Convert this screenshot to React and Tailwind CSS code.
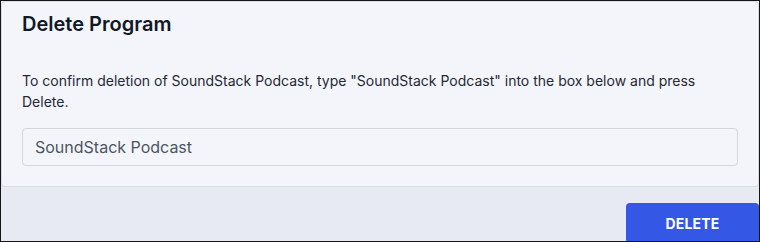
export default function App() {
  return (
    <div
      className="w-[760px] h-[242px] overflow-hidden border border-[#141414] bg-[#e8eaf3] flex flex-col"
      style={{ fontFamily: "Inter, 'Noto Sans', sans-serif" }}
    >
      {/* CARD */}
      <div className="rounded-[4px] border border-[#d9dce4] bg-[#f4f5fa] px-[20px] pt-[8px] pb-[20px]">
        <h1 className="text-[20px] leading-[28px] font-semibold text-[#111827]">
          Delete Program
        </h1>

        <p className="mt-[32px] text-[14px] leading-[21px] text-[#1f2937]">
          To confirm deletion of SoundStack Podcast, type "SoundStack Podcast" into the box below and press Delete.
        </p>

        <div className="mt-[16px] h-[38px] rounded-[4px] border border-[#d3d6dd] bg-[#f4f5fa] px-[12px] flex items-center text-[16px] text-[#4b5563]">
          SoundStack Podcast
        </div>
      </div>

      {/* FOOTER */}
      <div className="flex justify-end pt-[16px]">
        <button className="h-[40px] w-[133px] rounded-[4px] bg-[#3557e6] text-[14px] font-bold text-white tracking-[0.2px]">
          DELETE
        </button>
      </div>
    </div>
  );
}
